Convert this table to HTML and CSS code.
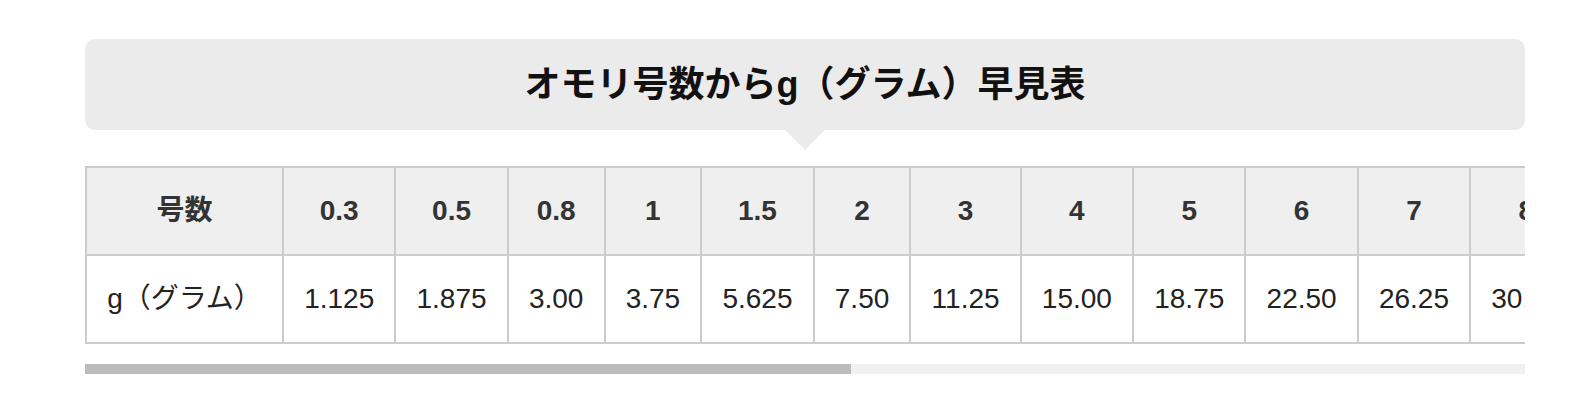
FILE: index.html
```html
<!DOCTYPE html>
<html lang="ja">
<head>
<meta charset="utf-8">
<title>オモリ号数からg（グラム）早見表</title>
<link rel="stylesheet" href="styles.css">
</head>
<body>
<div class="wrap">
  <div class="title"><h2>オモリ号数からg（グラム）早見表</h2></div>
  <div class="scroll">
    <table class="chart">
      <tr class="head">
        <th>号数</th><th>0.3</th><th>0.5</th><th>0.8</th><th>1</th><th>1.5</th><th>2</th><th>3</th><th>4</th><th>5</th><th>6</th><th>7</th><th>8</th><th>9</th><th>10</th><th>12</th><th>15</th><th>20</th><th>25</th><th>30</th><th>35</th><th>40</th><th>50</th>
      </tr>
      <tr class="body">
        <td>g（グラム）</td><td>1.125</td><td>1.875</td><td>3.00</td><td>3.75</td><td>5.625</td><td>7.50</td><td>11.25</td><td>15.00</td><td>18.75</td><td>22.50</td><td>26.25</td><td>30.00</td><td>33.75</td><td>37.50</td><td>45.00</td><td>56.25</td><td>75.00</td><td>93.75</td><td>112.50</td><td>131.25</td><td>150.00</td><td>187.50</td>
      </tr>
    </table>
  </div>
  <div class="bar"><div class="thumb" style="width: 53.2%"></div></div>
</div>
</body>
</html>
```

FILE: styles.css
```css
html, body {
  margin: 0;
  padding: 0;
  background: #fff;
}

body {
  font-family: "Liberation Sans", "Noto Sans CJK JP", sans-serif;
}

.wrap {
  width: 1440px;
  margin: 39px 0 0 85px;
}

.title {
  position: relative;
  background: #ebebeb;
  border-radius: 10px;
  height: 91px;
  display: flex;
  align-items: center;
  justify-content: center;
}

.title::after {
  content: "";
  position: absolute;
  left: 50%;
  bottom: -20px;
  margin-left: -20px;
  border-top: 20px solid #ebebeb;
  border-left: 20px solid transparent;
  border-right: 20px solid transparent;
}

.title h2 {
  margin: 0;
  font-family: "Liberation Sans", "Noto Sans CJK JP", sans-serif;
  font-size: 36px;
  font-weight: 700;
  line-height: 50px;
  color: #111;
}

.scroll {
  margin-top: 36px;
  overflow-x: auto;
  scrollbar-width: none;
}

.scroll::-webkit-scrollbar {
  display: none;
}

.bar {
  margin-top: 20px;
  height: 10px;
  background: #f0f0f0;
}

.thumb {
  height: 100%;
  background: #bbbbbb;
}

.chart {
  border-collapse: collapse;
  font-family: "Liberation Sans", "Noto Sans CJK JP", sans-serif;
  font-size: 28px;
}

.chart th,
.chart td {
  border: 2px solid #cccccc;
  padding: 27px 20.15px;
  line-height: 32px;
  white-space: nowrap;
  text-align: center;
}

.chart th {
  background: #efefef;
  color: #333;
  font-weight: 700;
}

.chart td {
  background: #fff;
  color: #222;
  font-weight: 400;
}
```
